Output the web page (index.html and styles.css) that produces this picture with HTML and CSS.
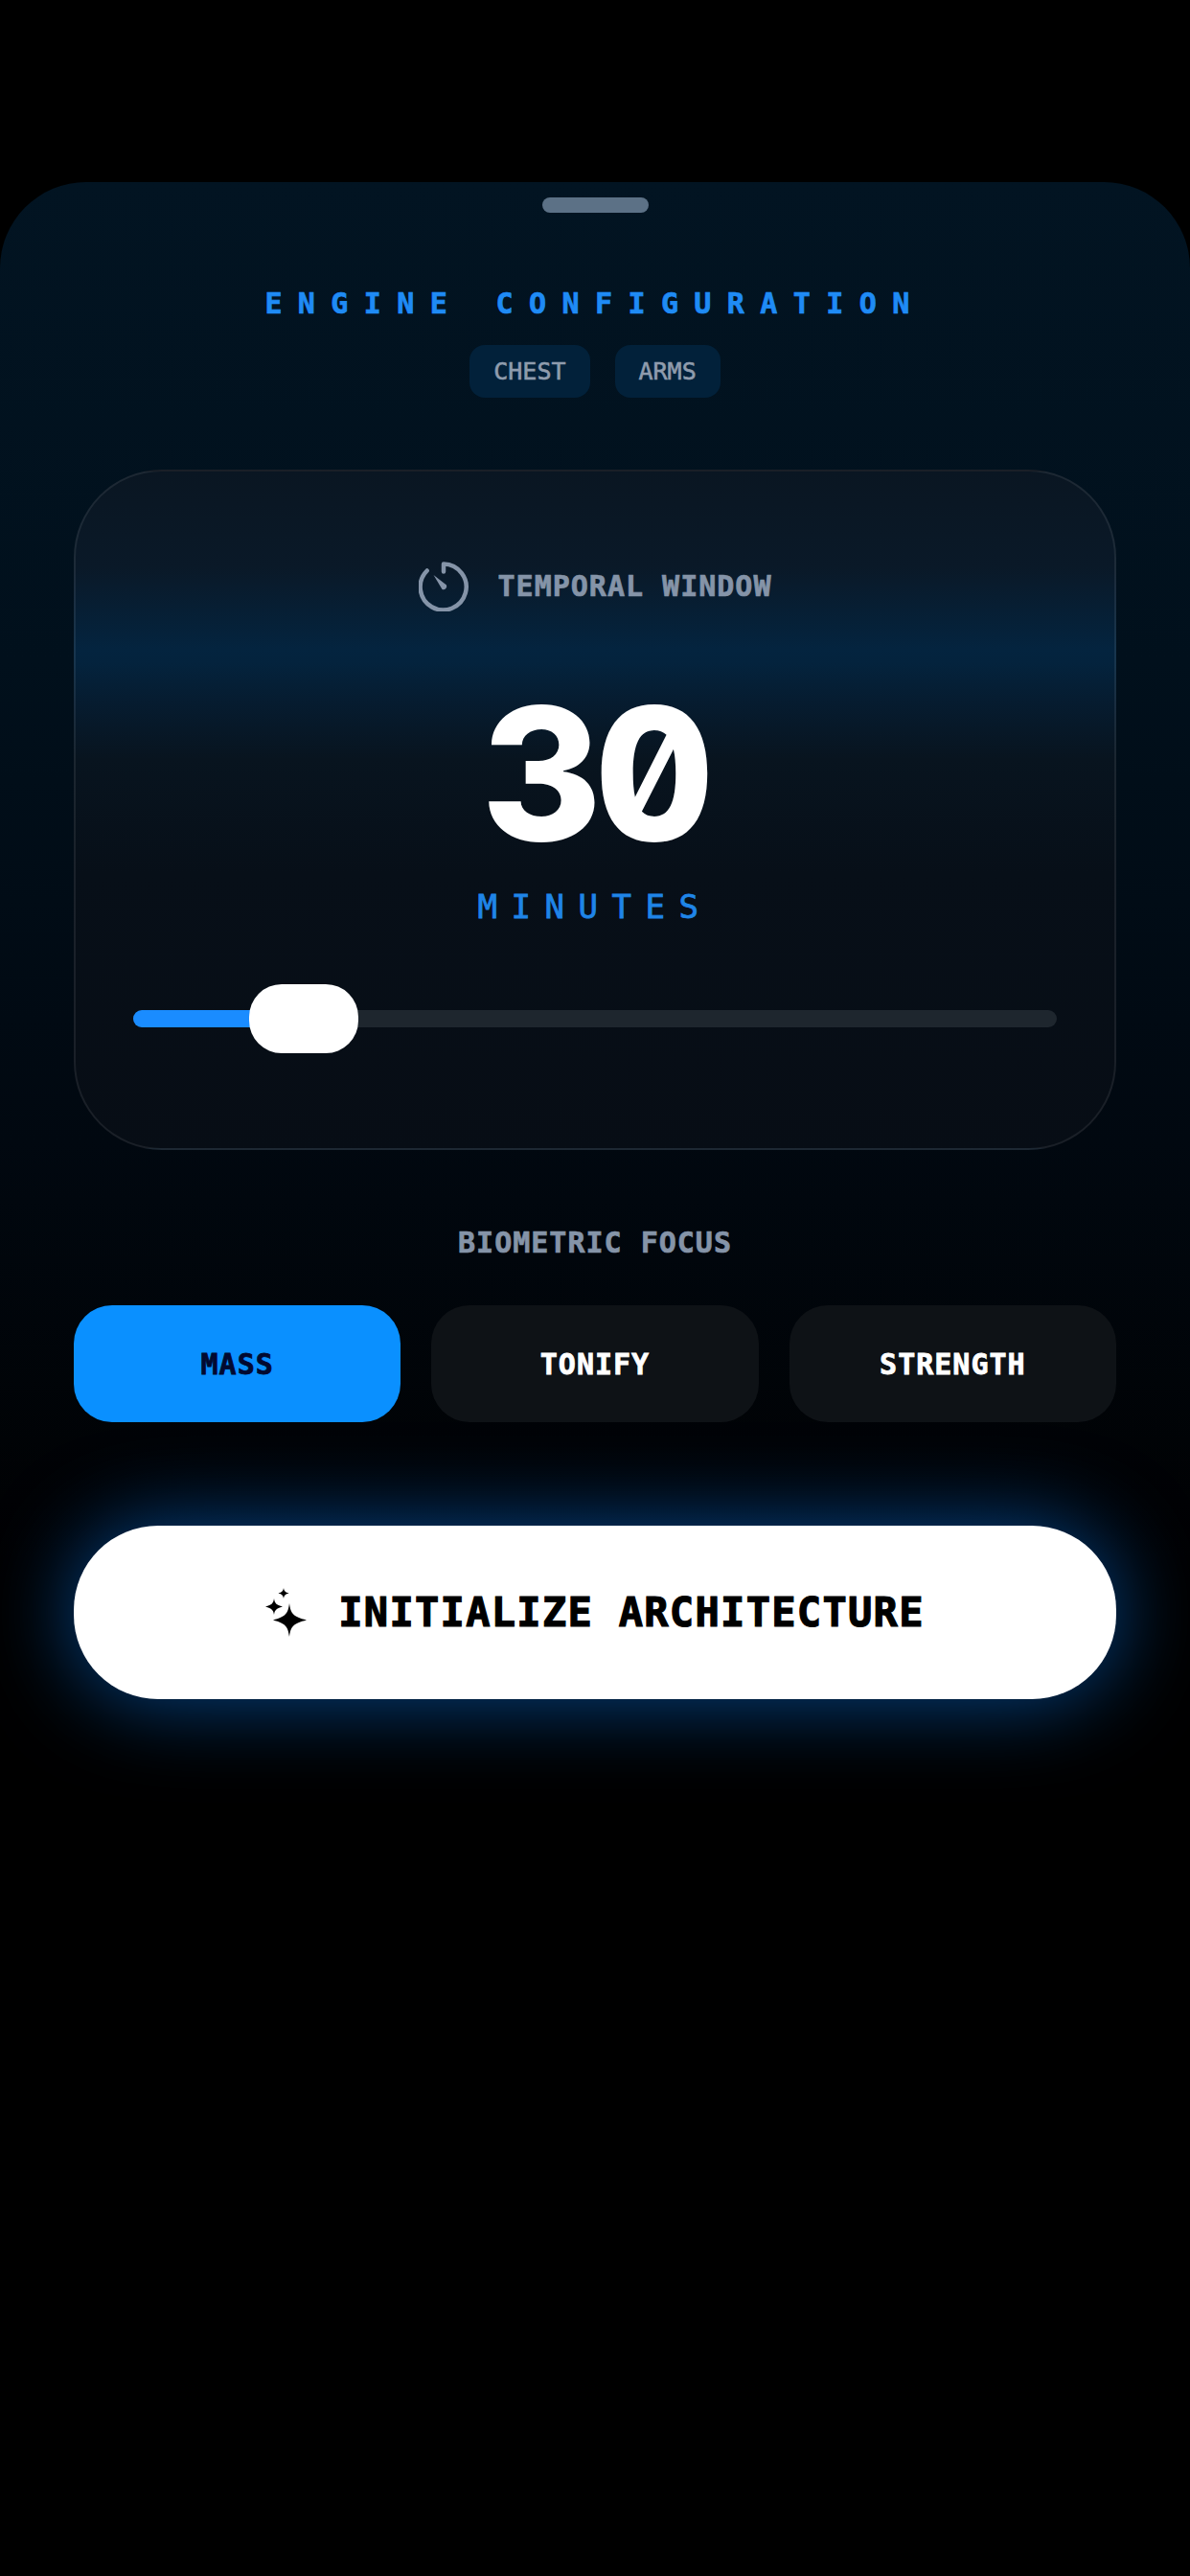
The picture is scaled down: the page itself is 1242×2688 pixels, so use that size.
FILE: index.html
```html
<!DOCTYPE html>
<html lang="en">
<head>
    <meta charset="UTF-8">
    <meta name="viewport" content="width=device-width, initial-scale=1.0">
    <title>Engine Configuration</title>
    <link rel="stylesheet" href="styles.css">
</head>
<body>
    <div class="sheet">
        <div class="handle"></div>
        <h1 class="title">ENGINE CONFIGURATION</h1>
        <div class="chips">
            <span class="chip">CHEST</span>
            <span class="chip">ARMS</span>
        </div>

        <div class="card">
            <div class="card-head">
                <svg class="timer" viewBox="0 0 52 52" fill="none" stroke="currentColor" stroke-width="4.5" stroke-linecap="round" stroke-linejoin="round">
                    <path d="M26 10.500V2.500A24 24 0 1 1 8.700 9.500"/>
                    <path d="M15.500 14L29 24.500A3.500 3.500 0 0 1 24.500 29Z" fill="currentColor" stroke="none"/>
                </svg>
                <span class="label">TEMPORAL WINDOW</span>
            </div>
            <div class="value">30</div>
            <div class="unit">MINUTES</div>
            <div class="slider">
                <div class="track">
                    <div class="fill"></div>
                </div>
                <div class="thumb"></div>
            </div>
        </div>

        <div class="label focus-label">BIOMETRIC FOCUS</div>
        <div class="options">
            <button class="option active">MASS</button>
            <button class="option">TONIFY</button>
            <button class="option">STRENGTH</button>
        </div>

        <button class="cta">
            <svg class="sparkle" viewBox="0 0 44 52" fill="currentColor">
                <path d="M25 16C26.500 27 29 30 43 33.500C29 37 26.500 40 25 51C23.500 40 21 37 8 33.500C21 30 23.500 27 25 16Z"/>
                <path d="M9 11C9.800 16 11 17.500 18 19.500C11 21.500 9.800 23 9 28C8.200 23 7 21.500 0 19.500C7 17.500 8.200 16 9 11Z"/>
                <path d="M19 0C19.500 3 20.500 4.500 24.500 5.500C20.500 6.500 19.500 8 19 11C18.500 8 17.500 6.500 13.500 5.500C17.500 4.500 18.500 3 19 0Z"/>
            </svg>
            <span>INITIALIZE ARCHITECTURE</span>
        </button>
    </div>
</body>
</html>
```

FILE: styles.css
```css
* {
    box-sizing: border-box;
}
html, body {
    margin: 0;
    height: 100%;
}
body {
    background: #000;
    font-family: "DejaVu Sans Mono", "Liberation Mono", monospace;
    overflow: hidden;
}
.sheet {
    height: 2498px;
    margin-top: 190px;
    padding: 16px 77px 0;
    border-radius: 90px 90px 0 0;
    background: linear-gradient(#021422 0, #01101c 500px, #010810 1000px, #000 1500px);
}
.handle {
    width: 111px;
    height: 16px;
    margin: 0 auto;
    border-radius: 8px;
    background: #5c7186;
}
.title {
    margin: 77px 0 0;
    font-size: 30px;
    line-height: 36px;
    font-weight: 700;
    letter-spacing: 16.4px;
    text-align: center;
    color: #1f8bf5;
    -webkit-text-stroke: 0.7px #1f8bf5;
}
.chips {
    display: flex;
    justify-content: center;
    gap: 26px;
    margin-top: 25px;
}
.chip {
    height: 55px;
    padding: 0 25px;
    border-radius: 16px;
    background: #02213a;
    color: #8f9cad;
    font-size: 25px;
    line-height: 55px;
    -webkit-text-stroke: 0.6px #8f9cad;
}
.card {
    height: 710px;
    margin-top: 75px;
    padding: 94px 60px 0;
    border: 2px solid rgba(255, 255, 255, 0.08);
    border-radius: 92px;
    background: linear-gradient(#0a1622 0, #0a1928 100px, #04243f 185px, #04233d 200px, #061c30 240px, #08141f 300px, #070f18 420px, #070d15 710px);
}
.card-head {
    display: flex;
    justify-content: center;
    align-items: center;
    gap: 31px;
    height: 52px;
}
.timer {
    width: 52px;
    height: 52px;
    color: #8594a8;
}
.label {
    color: #8594a8;
    font-size: 30px;
    line-height: 36px;
    font-weight: 700;
    letter-spacing: 1px;
    -webkit-text-stroke: 0.7px #8594a8;
}
.value {
    height: 200px;
    margin-top: 69px;
    color: #fff;
    font-family: Inter, "DejaVu Sans", sans-serif;
    font-size: 192px;
    line-height: 200px;
    font-weight: 800;
    font-feature-settings: "zero", "tnum";
    letter-spacing: -7px;
    text-align: center;
}
.unit {
    margin-top: 19px;
    color: #1f85e8;
    font-size: 34px;
    line-height: 40px;
    letter-spacing: 14.5px;
    text-align: center;
    -webkit-text-stroke: 0.8px #1f85e8;
}
.slider {
    position: relative;
    display: flex;
    align-items: center;
    height: 72px;
    margin-top: 61px;
}
.track {
    flex: 1;
    height: 18px;
    border-radius: 9px;
    background: #1e262e;
    overflow: hidden;
}
.fill {
    width: 140px;
    height: 100%;
    background: #1a8cff;
}
.thumb {
    position: absolute;
    left: 121px;
    top: 0;
    width: 114px;
    height: 72px;
    border-radius: 34px;
    background: #fff;
}
.focus-label {
    margin-top: 79px;
    text-align: center;
}
.options {
    display: grid;
    grid-template-columns: repeat(3, 1fr);
    gap: 32px;
    margin-top: 47px;
}
.option {
    height: 122px;
    border: none;
    border-radius: 40px;
    background: #0e1216;
    color: #fff;
    font-family: inherit;
    font-size: 30px;
    font-weight: 700;
    letter-spacing: 1px;
    -webkit-text-stroke: 0.8px currentColor;
}
.option.active {
    background: #0a90ff;
    color: #020a30;
}
.cta {
    display: flex;
    justify-content: center;
    align-items: center;
    gap: 32px;
    width: 100%;
    height: 181px;
    margin-top: 108px;
    border: none;
    border-radius: 88px;
    background: #fff;
    box-shadow: 0 0 90px rgba(10, 130, 255, 0.55);
    color: #000;
    font-family: inherit;
    font-size: 42px;
    font-weight: 700;
    letter-spacing: 1.3px;
    -webkit-text-stroke: 1.2px #000;
}
.sparkle {
    width: 44px;
    height: 52px;
}
```
